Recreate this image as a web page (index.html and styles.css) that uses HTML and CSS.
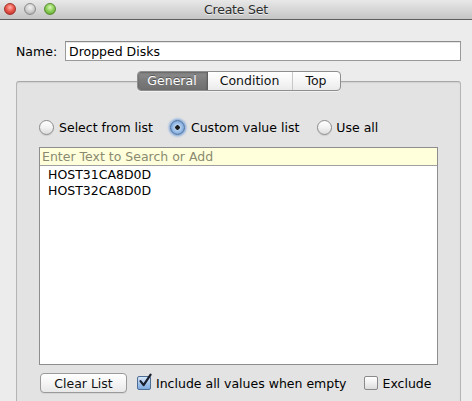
FILE: index.html
```html
<!DOCTYPE html>
<html>
<head>
<meta charset="utf-8">
<title>Create Set</title>
<link rel="stylesheet" href="styles.css">
</head>
<body>
<div class="window">
  <div class="titlebar">
    <div class="lights">
      <span class="light red"></span>
      <span class="light gray"></span>
      <span class="light green"></span>
    </div>
    <div class="title">Create Set</div>
    <div></div>
  </div>
  <div class="content">
    <div class="name-row">
      <span class="name-label">Name:</span>
      <div class="field">Dropped Disks</div>
    </div>
    <div class="tabbox">
      <div class="segmented">
        <span class="seg seg-general active">General</span>
        <span class="seg seg-condition">Condition</span>
        <span class="seg seg-top">Top</span>
      </div>
      <div class="radios">
        <label class="radio r1"><span class="radio-dot"></span>Select from list</label>
        <label class="radio r2 checked"><span class="radio-dot"></span>Custom value list</label>
        <label class="radio r3"><span class="radio-dot"></span>Use all</label>
      </div>
      <div class="listbox">
        <div class="search">Enter Text to Search or Add</div>
        <div class="items">
          <div class="item">HOST31CA8D0D</div>
          <div class="item">HOST32CA8D0D</div>
        </div>
      </div>
      <div class="bottom-row">
        <button class="btn">Clear List</button>
        <label class="check c1 checked"><span class="box"><svg width="16" height="16" viewBox="0 0 16 16"><path d="M3.5 8.2 L6.6 12.2 L13.6 1.6" fill="none" stroke="#1a1f2e" stroke-width="2.2" stroke-linecap="round" stroke-linejoin="round"/></svg></span>Include all values when empty</label>
        <label class="check c2"><span class="box"></span>Exclude</label>
      </div>
    </div>
  </div>
</div>
</body>
</html>
```

FILE: styles.css
```css
* { box-sizing: border-box; }
html, body {
  margin: 0;
  padding: 0;
  width: 472px;
  height: 401px;
  overflow: hidden;
  background: #ececec;
  font-family: "Lucida Grande", "DejaVu Sans", sans-serif;
  font-size: 12.5px;
  color: #000;
}
.window {
  width: 472px;
  height: 401px;
  background: #ececec;
}
.titlebar {
  height: 20px;
  display: grid;
  grid-template-columns: 1fr auto 1fr;
  align-items: center;
  background: linear-gradient(#e8e8e8, #d3d3d3 60%, #c4c4c4);
  border-bottom: 1px solid #5e5e5e;
}
.lights {
  display: flex;
  gap: 8px;
  padding-left: 4px;
  margin-top: -1px;
}
.light {
  width: 12px;
  height: 12px;
  border-radius: 50%;
  border: 1px solid rgba(0,0,0,0.35);
}
.light.red { background: radial-gradient(circle at 50% 35%, #ffb3ad 0%, #ec5b50 45%, #b3221a 100%); border-color: #a3322b; }
.light.gray { background: radial-gradient(circle at 50% 35%, #f4f4f4 0%, #cfcfcf 50%, #9a9a9a 100%); border-color: #8d8d8d; }
.light.green { background: radial-gradient(circle at 50% 35%, #dcf7b8 0%, #8fd15c 45%, #4f9a20 100%); border-color: #5c8d34; }
.title {
  font-size: 12.5px;
  color: #2e2e2e;
  text-shadow: 0 1px 0 rgba(255,255,255,0.6);
  letter-spacing: -0.2px;
}
.content {
  padding: 21px 11px 0 16px;
}
.name-row {
  display: flex;
  align-items: center;
  height: 20px;
}
.name-label {
  width: 49px;
  padding-left: 0;
}
.field {
  flex: 1;
  height: 20px;
  background: #fff;
  border: 1px solid #9a9a9a;
  border-top-color: #8a8a8a;
  box-shadow: inset 0 1px 0 #e6e6e6;
  padding: 1px 0 0 3px;
  line-height: 17px;
}
.tabbox {
  margin-top: 20px;
  width: 445px;
  height: 340px;
  background: #e3e3e3;
  border: 1px solid #b5b5b5;
  border-top-color: #a8a8a8;
  border-radius: 3px 3px 0 0;
  box-shadow: inset 0 1px 1px rgba(0,0,0,0.08);
  display: flex;
  flex-direction: column;
  padding: 0 22px 0 22px;
}
.segmented {
  align-self: center;
  margin-top: -11px;
  display: flex;
  height: 20px;
  border: 1px solid #8e8e8e;
  border-radius: 4px;
  background: linear-gradient(#ffffff, #f6f6f6 50%, #ebebeb);
  box-shadow: 0 1px 0 rgba(255,255,255,0.5);
  overflow: hidden;
}
.seg {
  display: flex;
  align-items: center;
  justify-content: center;
  height: 100%;
  line-height: 18px;
  color: #111;
}
.seg-general { width: 70px; }
.seg-condition { width: 85px; border-right: 1px solid #c8c8c8; }
.seg-top { width: 47px; }
.seg.active {
  background: linear-gradient(#8d8d8d, #7a7a7a 50%, #6f6f6f);
  color: #fff;
  text-shadow: 0 -1px 0 rgba(0,0,0,0.35);
  box-shadow: inset 0 1px 2px rgba(0,0,0,0.3);
  border-right: 1px solid #5f5f5f;
}
.radios {
  display: flex;
  align-items: center;
  margin-top: 28px;
  height: 16px;
}
.radio {
  display: flex;
  align-items: center;
  white-space: nowrap;
}
.radio-dot {
  width: 15px;
  height: 15px;
  border-radius: 50%;
  border: 1px solid #8c8c8c;
  background: linear-gradient(#ffffff, #f2f2f2 50%, #dcdcdc);
  box-shadow: 0 1px 1px rgba(0,0,0,0.1);
  margin-right: 5px;
  flex: none;
  position: relative;
}
.r2 { margin-left: 17px; }
.r3 { margin-left: 18px; }
.r3 .radio-dot { margin-right: 4px; }
.radio.checked .radio-dot {
  border-color: #4a6f9e;
  background: radial-gradient(circle at 50% 50%, #1d1d1d 0 2px, #b9d3f0 2.5px, #7fa9dc 70%, #5b89c6 100%);
  box-shadow: 0 0 2px 1.5px rgba(96,150,220,0.65);
  margin-right: 6px;
}
.listbox {
  margin-top: 12px;
  height: 218px;
  border: 1px solid #8e8e8e;
  background: #fff;
  display: flex;
  flex-direction: column;
}
.search {
  height: 18px;
  background: #ffffdb;
  border-bottom: 1px solid #a0a0a0;
  color: #8a8a70;
  padding-left: 2px;
  line-height: 17px;
}
.items {
  padding: 1px 0 0 8px;
}
.item {
  height: 16px;
  line-height: 16px;
}
.bottom-row {
  display: flex;
  align-items: center;
  margin-top: 8px;
  height: 20px;
}
.btn {
  font: inherit;
  color: #111;
  width: 87px;
  height: 20px;
  margin-left: 1px;
  border: 1px solid #9a9a9a;
  border-radius: 4px;
  background: linear-gradient(#ffffff, #f5f5f5 50%, #e8e8e8);
  box-shadow: 0 1px 0 rgba(0,0,0,0.06);
  padding: 0;
  line-height: 17px;
}
.check {
  display: flex;
  align-items: center;
  white-space: nowrap;
}
.c1 { margin-left: 10px; }
.c2 { margin-left: 17px; }
.box {
  width: 14px;
  height: 14px;
  border: 1px solid #8a8a8a;
  border-radius: 2px;
  background: linear-gradient(#ffffff, #f0f0f0 50%, #dcdcdc);
  margin-right: 5px;
  position: relative;
  flex: none;
}
.check.checked .box {
  border-color: #4d6d97;
  background: linear-gradient(#d8e7f8, #a6c6ec 50%, #7ea9de);
}
.check.checked .box svg {
  position: absolute;
  left: -1px;
  top: -4px;
}
```
